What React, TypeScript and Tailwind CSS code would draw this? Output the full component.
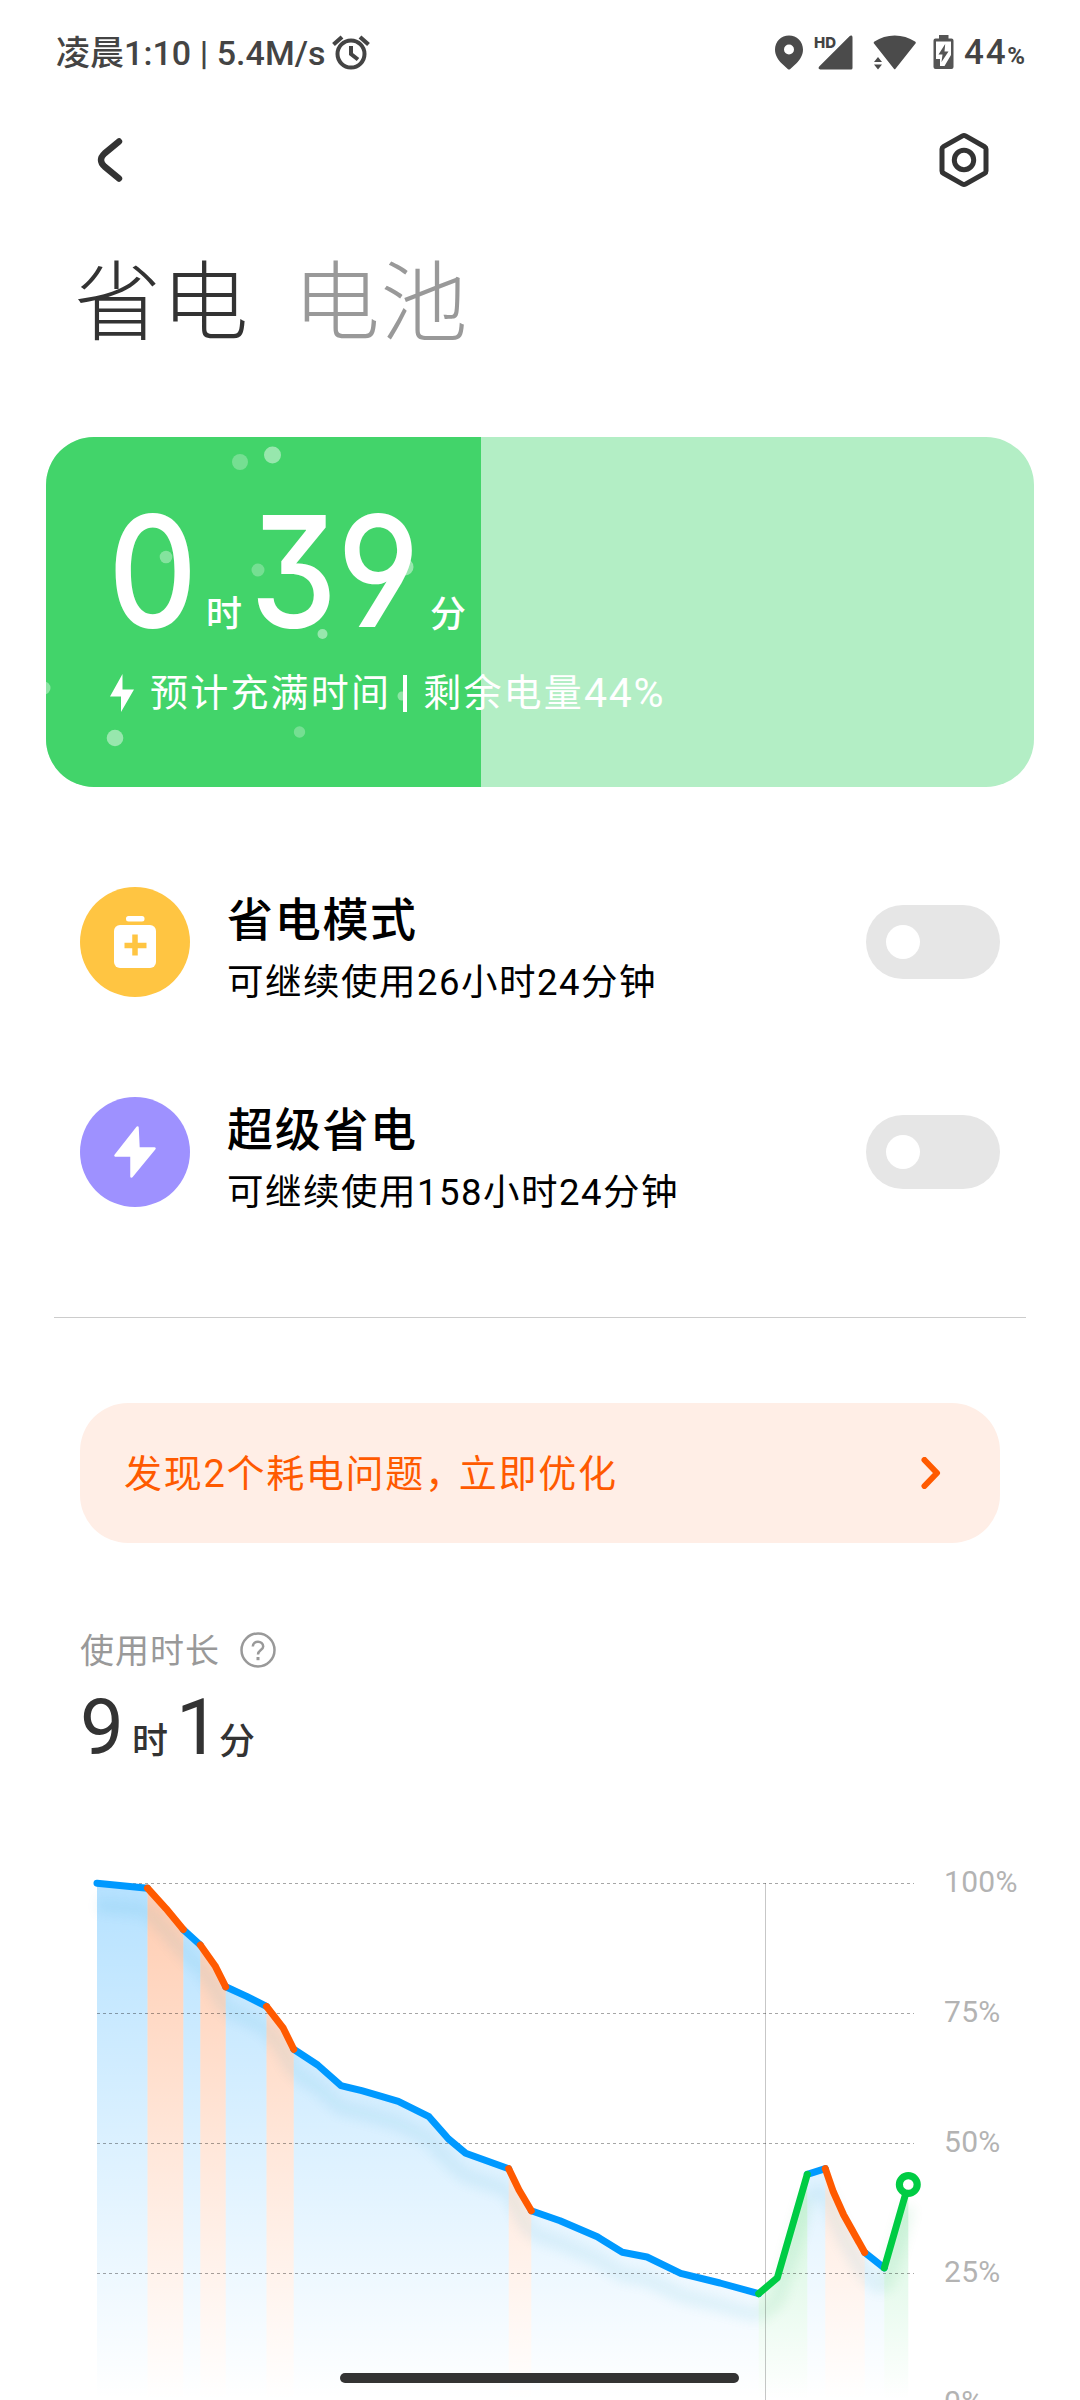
import React, { useState } from "react";

interface Point {
  x: number;
  y: number;
}

interface Segment {
  kind: "normal" | "heavy" | "charge";
  points: [number, number][];
}

interface Mode {
  id: string;
  title: string;
  remaining: string;
  icon: React.ReactNode;
}

// Battery level over time, split by how the phone was used
const segments: Segment[] = [
  { kind: "normal", points: [[97, 1883.2], [147.5, 1888.2]] },
  { kind: "normal", points: [[183.3, 1929.6], [200.3, 1945]] },
  { kind: "normal", points: [[225.7, 1986.8], [246.7, 1996.4], [266.5, 2006.4]] },
  {
    kind: "normal",
    points: [
      [293.7, 2049.3], [317.7, 2065], [341, 2085.7], [361.7, 2090.7], [378, 2095.3],
      [398.3, 2101.3], [429, 2116.7], [448.3, 2138.7], [465.7, 2153.3], [508.7, 2168.7],
    ],
  },
  {
    kind: "normal",
    points: [
      [531.3, 2210.7], [560, 2220.7], [597.3, 2236.7], [622.3, 2252.3],
      [647, 2257], [680.7, 2273.3], [720, 2283], [758.7, 2293.7],
    ],
  },
  { kind: "normal", points: [[807.3, 2174.3], [825.3, 2168.6]] },
  { kind: "normal", points: [[864.7, 2252.5], [884.3, 2267.9]] },
  { kind: "heavy", points: [[147.5, 1888.2], [166, 1908.6], [183.3, 1929.6]] },
  { kind: "heavy", points: [[200.3, 1945], [215, 1965.7], [225.7, 1986.8]] },
  { kind: "heavy", points: [[266.5, 2006.4], [283.3, 2028.2], [293.7, 2049.3]] },
  { kind: "heavy", points: [[508.7, 2168.7], [519, 2190], [531.3, 2210.7]] },
  { kind: "heavy", points: [[825.3, 2168.6], [833.3, 2191.8], [843.7, 2215], [864.7, 2252.5]] },
  { kind: "charge", points: [[758.7, 2293.7], [777.3, 2277.9], [807.3, 2174.3]] },
  { kind: "charge", points: [[884.3, 2267.9], [908.3, 2184.6]] },
];

const lineColors = { normal: "#0099ff", heavy: "#ff5a00", charge: "#00cc44" };
const gridLines = [1883.5, 2013.5, 2143.5, 2273.5];
const gridLabels = ["100%", "75%", "50%", "25%", "0%"];

const bubbles: (Point & { r: number; o: number })[] = [
  { x: 194, y: 25, r: 8, o: 0.27 },
  { x: 226.5, y: 18, r: 8.5, o: 0.45 },
  { x: 120, y: 120, r: 6.3, o: 0.35 },
  { x: 212, y: 133, r: 6.5, o: 0.27 },
  { x: 359, y: 130, r: 8.5, o: 0.45 },
  { x: 276.5, y: 197, r: 5, o: 0.45 },
  { x: -2, y: 251, r: 6.5, o: 0.4 },
  { x: 356, y: 259, r: 4.5, o: 0.4 },
  { x: 69, y: 301, r: 8.3, o: 0.45 },
  { x: 253.5, y: 295, r: 5.7, o: 0.27 },
];

function StatusBar() {
  return (
    <div className="flex h-[104px] shrink-0 items-center pl-14 pr-[55px] text-[#444]">
      <span className="pt-0.5 text-[34px] font-medium leading-none tracking-[0.050px]">凌晨1:10 | 5.4M/s</span>
      <svg className="ml-1.5 h-9 w-[38px]" viewBox="0 0 38 36" fill="none" stroke="currentColor">
        <circle cx="19" cy="20" r="13.5" strokeWidth="4" />
        <path d="M19 12v8l7 5.5" strokeWidth="4" />
        <path d="M1.5 10.5 10 3M36.500 10.500 28 3" strokeWidth="4.200" />
      </svg>
      <div className="ml-auto flex items-center">
        <svg className="h-[35px] w-[28px]" viewBox="0 0 28 35" fill="#4b4b4b">
          <path
            fillRule="evenodd"
            d="M14 .5C6.200.5 0 6.600 0 14.500c0 6 3.200 10.300 6.500 13.800l6.500 5.900q1 .8 2 0l6.500-5.900C24.800 24.800 28 20.500 28 14.500 28 6.600 21.800.5 14 .5ZM14 9.500a5 5 0 1 1 0 10 5 5 0 0 1 0-10Z"
          />
        </svg>
        <div className="relative ml-3 h-[35px] w-[38px]">
          <svg className="h-full w-full" viewBox="0 0 38 35" fill="#4b4b4b">
            <path d="M34.500 1.300 4.200 31.600c-1.200 1.200-.6 2.900 1 2.900H36q1.500 0 1.500-1.500V2.500c0-2-1.700-2.500-3-1.200Z" />
          </svg>
          <span className="absolute left-[-1px] top-[-1px] pr-px font-['Inter'] text-[15px] font-extrabold leading-[17px]">
            HD
          </span>
        </div>
        <svg className="ml-5 h-[35px] w-[43px]" viewBox="0 0 43 35" fill="#4b4b4b">
          <path d="M1 8.500q-.8-1.200.5-2Q10.500.5 21.700.5T42 6.500q1.300.8.5 2L22.500 33.800q-.8 1-1.600 0Z" />
          <path d="m5 22 4 5H1ZM5 34.500l4-5H1Z" />
        </svg>
        <svg className="ml-[17px] h-[35px] w-[21px]" viewBox="0 0 21 35" fill="#555">
          <path d="M6 0h9.500v4H6Z" />
          <path fillRule="evenodd" d="M2.500 3.500h16q2 0 2 2V32q0 2-2 2h-16q-2 0-2-2V5.500q0-2 2-2ZM3 6.500V24h4v7h4.500L18 20V6.500Z" />
          <path d="M12.200 9 5.500 19.500h4l-1 7.500L15.500 16.500h-4Z" />
        </svg>
        <span className="ml-2.5 flex items-baseline font-medium leading-none">
          <span className="text-[35px] tracking-[1.700px]">44</span>
          <span className="text-[24px] font-bold">%</span>
        </span>
      </div>
    </div>
  );
}

function NavBar() {
  return (
    <div className="flex h-28 shrink-0 items-center justify-between pl-[97px] pr-[90px] text-[#333]">
      <button aria-label="返回">
        <svg className="h-11 w-[26px]" viewBox="0 0 26 44" fill="none" stroke="currentColor" strokeWidth="6.400" strokeLinecap="round">
          <path d="M22 3.500 7.500 15.500q-7 6.500 0 13L22 40.500" />
        </svg>
      </button>
      <button aria-label="设置">
        <svg className="h-[56px] w-[52px]" viewBox="0 0 52 56" fill="none" stroke="currentColor" strokeWidth="5" strokeLinejoin="round">
          <path d="M24.500 3.900q1.500-.8 3 0L46.600 14.700q1.400.8 1.400 2.400v21.800q0 1.600-1.400 2.400L27.500 52.100q-1.500.8-3 0L5.400 41.300Q4 40.500 4 38.900V17.100q0-1.600 1.400-2.400Z" />
          <circle cx="26" cy="28" r="9.700" />
        </svg>
      </button>
    </div>
  );
}

function BigDigits({ children }: { children: string }) {
  return (
    <span className="inline-block origin-left scale-x-[0.9] text-[154px] leading-none font-['Inter'] [font-feature-settings:'cv09','cv04']">
      {children}
    </span>
  );
}

function BatteryCard() {
  return (
    <div className="relative mx-[46px] h-[350px] shrink-0 overflow-hidden rounded-[48px] bg-[#b3eec5] text-white">
      <div className="absolute inset-y-0 left-0 w-[435px] bg-[#42d46a]" />
      <svg className="absolute inset-0 h-full w-full" viewBox="0 0 988 350" fill="#fff">
        {bubbles.map((b, i) => (
          <circle key={i} cx={b.x} cy={b.y} r={b.r} fillOpacity={b.o} />
        ))}
      </svg>
      <div className="relative pl-[62px] pt-[57px]">
        <div className="flex h-[154px] items-baseline font-medium">
          <span className="w-[98px]">
            <BigDigits>0</BigDigits>
          </span>
          <span className="w-[44px] text-[36px]">时</span>
          <span className="w-[180px]">
            <BigDigits>39</BigDigits>
          </span>
          <span className="text-[36px]">分</span>
        </div>
        <div className="mt-5 flex items-center pl-0.5 text-[38px] leading-[50px]">
          <svg className="mr-4 h-[38px] w-6" viewBox="0 0 24 38" fill="currentColor">
            <path d="M12.500 0 0 22.500h11V38L24 15.500H12.500Z" />
          </svg>
          <span className="tracking-[2.200px]">预计充满时间</span>
          <span className="ml-3 mr-4 h-[37px] w-1 bg-white" />
          <span className="tracking-[2.200px]">剩余电量</span>
          <span className="text-[41px] tracking-[1.700px]">44%</span>
        </div>
      </div>
    </div>
  );
}

const modes: Mode[] = [
  {
    id: "saver",
    title: "省电模式",
    remaining: "可继续使用26小时24分钟",
    icon: (
      <svg className="h-[110px] w-[110px]" viewBox="0 0 110 110">
        <circle cx="55" cy="55" r="55" fill="#ffc542" />
        <rect x="46" y="29" width="18.500" height="5.500" rx="2.500" fill="#fff" />
        <rect x="34" y="38" width="42" height="43" rx="6" fill="#fff" />
        <path d="M55 47.500v21M44.500 58.500h22" stroke="#ffc542" strokeWidth="5.500" />
      </svg>
    ),
  },
  {
    id: "ultra",
    title: "超级省电",
    remaining: "可继续使用158小时24分钟",
    icon: (
      <svg className="h-[110px] w-[110px]" viewBox="0 0 110 110">
        <circle cx="55" cy="55" r="55" fill="#9e91ff" />
        <path
          d="M57.500 30.500 35.500 58.500H51.500V79.500L74.500 51.500H58.500Z"
          fill="#fff"
          stroke="#fff"
          strokeWidth="2.500"
          strokeLinejoin="round"
        />
      </svg>
    ),
  },
];

function ModeRow({ mode }: { mode: Mode }) {
  const [enabled, setEnabled] = useState<boolean>(false);

  return (
    <div className="flex h-[210px] shrink-0 items-center px-20">
      {mode.icon}
      <div className="ml-[37px] flex flex-col pt-[17px] text-black">
        <span className="text-[46px] font-medium leading-[58px] tracking-[1.700px]">{mode.title}</span>
        <span className="mt-1.5 text-[36.500px] leading-[56px] tracking-[1.500px]">{mode.remaining}</span>
      </div>
      <button
        role="switch"
        aria-checked={enabled}
        aria-label={mode.title}
        onClick={() => setEnabled(!enabled)}
        className="ml-auto flex h-[74px] w-[134px] items-center rounded-full bg-[#e6e6e6] px-5"
      >
        <span className="h-[34px] w-[34px] rounded-full bg-white" />
      </button>
    </div>
  );
}

function toPath(points: [number, number][]) {
  return points.map(([x, y]) => `${x} ${y}`).join(" L ");
}

function BatteryChart() {
  return (
    <div className="flex min-h-0 flex-1 overflow-hidden">
      <svg className="h-[582px] w-[930px] shrink-0" viewBox="0 1818 930 582" fill="none">
        <defs>
          <linearGradient id="normal" gradientUnits="userSpaceOnUse" x1="0" y1="1883" x2="0" y2="2400">
            <stop offset="0" stopColor="#0099ff" stopOpacity="0.29" />
            <stop offset="0.5" stopColor="#0099ff" stopOpacity="0.14" />
            <stop offset="1" stopColor="#0099ff" stopOpacity="0" />
          </linearGradient>
          <linearGradient id="heavy" gradientUnits="userSpaceOnUse" x1="0" y1="1883" x2="0" y2="2400">
            <stop offset="0" stopColor="#ff5a00" stopOpacity="0.31" />
            <stop offset="0.5" stopColor="#ff5a00" stopOpacity="0.15" />
            <stop offset="1" stopColor="#ff5a00" stopOpacity="0" />
          </linearGradient>
          <linearGradient id="charge" gradientUnits="userSpaceOnUse" x1="0" y1="2165" x2="0" y2="2400">
            <stop offset="0" stopColor="#00cc44" stopOpacity="0.2" />
            <stop offset="1" stopColor="#00cc44" stopOpacity="0" />
          </linearGradient>
          <filter id="soft" x="-5%" y="-50%" width="110%" height="200%" filterUnits="objectBoundingBox">
            <feGaussianBlur stdDeviation="6" />
          </filter>
        </defs>

        {segments.map((s, i) => (
          <path
            key={i}
            d={`M ${s.points[0][0]} 2400 L ${toPath(s.points)} L ${s.points[s.points.length - 1][0]} 2400 Z`}
            fill={`url(#${s.kind})`}
          />
        ))}
        <g filter="url(#soft)" opacity="0.08" strokeWidth="15">
          {segments.map((s, i) => (
            <path
              key={i}
              d={`M ${toPath(s.points)}`}
              transform="translate(0 22)"
              stroke={s.kind === "charge" ? "#00aa44" : "#0a96c0"}
            />
          ))}
        </g>

        {gridLines.map((y) => (
          <path key={y} d={`M97 ${y}H914`} stroke="#000" strokeOpacity="0.35" strokeDasharray="3 3" />
        ))}
        <path d="M765.500 1883V2400" stroke="#000" strokeOpacity="0.22" />

        {segments.map((s, i) => (
          <path
            key={i}
            d={`M ${toPath(s.points)}`}
            stroke={lineColors[s.kind]}
            strokeWidth="7"
            strokeLinecap="round"
            strokeLinejoin="round"
          />
        ))}
        <circle cx="908.300" cy="2184.500" r="8.900" fill="#fff" stroke="#00cc44" strokeWidth="7.200" />
      </svg>
      <div className="ml-[14px] flex flex-col text-[30px] text-[#b3b3b3]">
        {gridLabels.map((label) => (
          <span key={label} className="flex h-[130px] shrink-0 items-center pb-1 tracking-[0.300px]">
            {label}
          </span>
        ))}
      </div>
    </div>
  );
}

export default function App(): React.ReactElement {
  return (
    <div className="relative flex h-[2400px] w-[1080px] flex-col overflow-hidden bg-white font-['Roboto','Noto_Sans_CJK_SC',sans-serif]">
      <StatusBar />
      <NavBar />

      {/* Tabs */}
      <div className="flex h-[221px] shrink-0 gap-[44px] pl-[74px] pt-[38px] text-[87px] font-light leading-[100px] tracking-[0.500px]">
        <span className="text-[#333]">省电</span>
        <span className="text-[#999]">电池</span>
      </div>

      <BatteryCard />

      <div className="mt-[50px] flex shrink-0 flex-col">
        {modes.map((mode) => (
          <ModeRow key={mode.id} mode={mode} />
        ))}
      </div>

      <div className="mx-[54px] mt-[60px] h-px shrink-0 bg-[#ccc]" />

      {/* Optimize banner */}
      <button className="mx-20 mt-[85px] flex h-[140px] shrink-0 items-center justify-between rounded-[48px] bg-[#ffeee6] pl-[44px] pr-[59px] text-[#ff5a00]">
        <span className="flex pt-[3px] text-[38px] tracking-[1.700px]">
          <span>发现2个耗电问题</span>
          <span className="tracking-[-4.200px]">，</span>
          <span>立即优化</span>
        </span>
        <svg className="h-8 w-5" viewBox="0 0 20 32" fill="none" stroke="currentColor" strokeWidth="6" strokeLinecap="round" strokeLinejoin="round">
          <path d="M3.500 3 16 16 3.500 29" />
        </svg>
      </button>

      {/* Usage time */}
      <div className="flex h-[275px] shrink-0 flex-col pl-[80px] pt-[84px]">
        <div className="flex h-[46px] items-center text-[#999]">
          <span className="pt-0.5 text-[34px] leading-[46px] tracking-[1px]">使用时长</span>
          <svg className="ml-5 h-9 w-9" viewBox="0 0 36 36" fill="none" stroke="currentColor" strokeWidth="2.500">
            <circle cx="18" cy="18" r="16.500" />
            <path d="M12.800 14.500c0-6.500 10.400-6.500 10.400 0 0 3.500-5.200 3.800-5.200 8" />
            <path d="M18 25v3.200" strokeWidth="3" />
          </svg>
        </div>
        <div className="mt-[15px] flex h-[80px] items-baseline text-[36px] font-medium leading-[80px] text-[#333]">
          <span className="w-[52px] text-[78px] font-normal">9</span>
          <span className="w-[44px]">时</span>
          <span className="w-[43px] text-[78px] font-normal">1</span>
          <span>分</span>
        </div>
      </div>

      <BatteryChart />

      {/* Home indicator */}
      <div className="absolute bottom-[17px] left-[340px] h-2.5 w-[399px] rounded-full bg-[#333]" />
    </div>
  );
}
